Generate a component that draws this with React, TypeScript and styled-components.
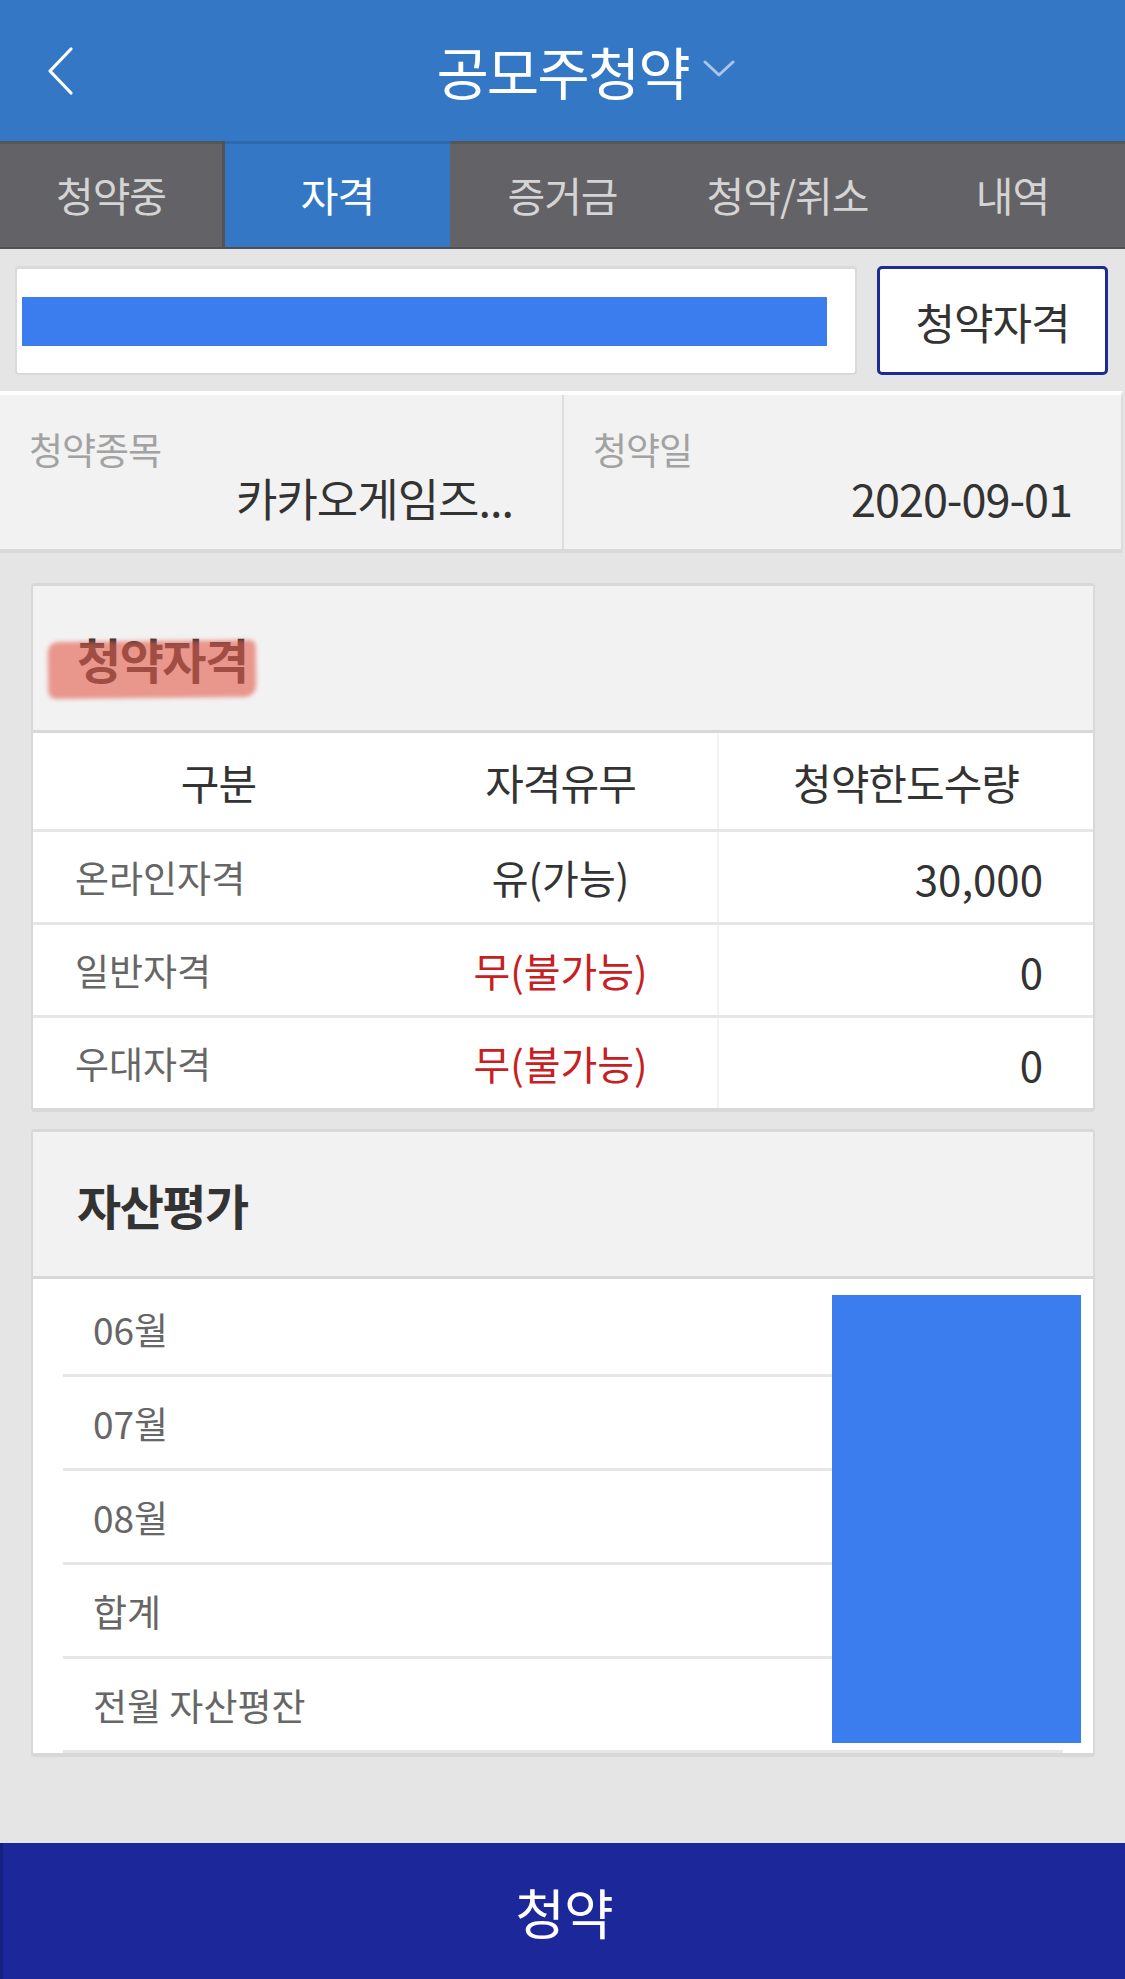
import React from 'react';
import styled, { createGlobalStyle, css } from 'styled-components';

const GlobalStyle = createGlobalStyle`
  html, body {
    margin: 0;
    padding: 0;
    background: #e5e5e5;
  }
  body {
    font-family: "Noto Sans CJK KR", "Noto Sans", sans-serif;
  }
  * {
    box-sizing: border-box;
  }
`;

const Page = styled.div`
  width: 1125px;
  min-height: 100vh;
  display: flex;
  flex-direction: column;
  background: #e5e5e5;
`;

const Header = styled.header`
  height: 141px;
  background: #3478c5;
  display: grid;
  grid-template-columns: 1fr auto 1fr;
  align-items: center;
`;

const BackButton = styled.button`
  justify-self: start;
  display: flex;
  padding: 0 0 0 46px;
  border: 0;
  background: none;
`;

const Title = styled.h1`
  margin: 0;
  color: #fff;
  font-size: 57px;
  font-weight: 400;
  letter-spacing: -2px;
  line-height: 1;
`;

const TitleToggle = styled.span`
  justify-self: start;
  display: flex;
  margin: -4px 0 0 14px;
`;

const TabBar = styled.nav`
  height: 108px;
  display: grid;
  grid-template-columns: repeat(5, 1fr);
  background: #636266;
  border-bottom: 2px solid #505053;
`;

const Tab = styled.button<{ $active?: boolean }>`
  display: flex;
  align-items: center;
  justify-content: center;
  border: 0;
  padding: 0;
  font-family: inherit;
  font-size: 41px;
  letter-spacing: -1px;
  color: #d4d4d4;
  background: transparent;
  box-shadow: inset 0 3px 0 rgba(0, 0, 0, 0.12);

  &:first-child {
    border-right: 3px solid #535256;
  }

  ${(p) =>
    p.$active &&
    css`
      background: #3478c5;
      color: #fff;
    `}
`;

const SearchRow = styled.div`
  display: flex;
  gap: 20px;
  padding: 17px 17px 0 15px;
`;

const SearchField = styled.div`
  flex: 1;
  height: 109px;
  display: flex;
  align-items: center;
  padding-left: 5px;
  background: #fff;
  border: 2px solid #d9d9d9;
  border-top-width: 3px;
  border-radius: 4px;
`;

const Redacted = styled.div<{ $w: number; $h: number }>`
  width: ${(p) => p.$w}px;
  height: ${(p) => p.$h}px;
  background: #3b7def;
`;

const QualifyButton = styled.button`
  width: 231px;
  height: 109px;
  background: #fff;
  border: 3px solid #1e2b94;
  border-radius: 5px;
  font-family: inherit;
  font-size: 43px;
  letter-spacing: -1px;
  color: #333;
`;

const InfoPanel = styled.section`
  margin-top: 16px;
  width: 1123px;
  display: grid;
  grid-template-columns: 562px 1fr;
  background: #f2f2f2;
  border-top: 4px solid #fff;
  border-bottom: 4px solid #d9d9d9;
  border-right: 2px solid #dcdcdc;
`;

const InfoCell = styled.div`
  padding: 34px 49px 27px 29px;

  & + & {
    border-left: 2px solid #dedede;
  }
`;

const InfoLabel = styled.div`
  font-size: 37px;
  line-height: 40px;
  letter-spacing: -1px;
  color: #a2a2a2;
`;

const InfoValue = styled.div`
  margin-top: 5px;
  font-size: 45px;
  line-height: 48px;
  letter-spacing: -1px;
  color: #333;
  text-align: right;
  white-space: nowrap;
`;

const Content = styled.main`
  display: flex;
  flex-direction: column;
  gap: 17px;
  padding: 30px 30px 0 31px;
`;

const Card = styled.section`
  background: #fff;
  border: 2px solid #d8d8d8;
  border-top-width: 3px;
  border-bottom-width: 4px;
  border-radius: 4px;
  overflow: hidden;
`;

const CardHeader = styled.div`
  height: 147px;
  display: flex;
  align-items: center;
  padding-left: 44px;
  background: #f2f2f2;
  border-bottom: 3px solid #d8d8d8;
`;

const CardTitle = styled.h2<{ $marked?: boolean }>`
  position: relative;
  margin: 0;
  font-size: 48px;
  font-weight: 700;
  line-height: 48px;
  letter-spacing: -1.5px;
  color: #333;

  ${(p) =>
    p.$marked &&
    css`
      &::after {
        content: '';
        position: absolute;
        left: -29px;
        right: -8px;
        top: 7px;
        bottom: -16px;
        background: rgba(227, 94, 77, 0.62);
        border-radius: 10px 6px 12px 8px;
        filter: blur(2px);
        transform: rotate(-0.6deg);
      }
    `}
`;

const QualRow = styled.div<{ $head?: boolean }>`
  display: grid;
  grid-template-columns: 371px 313px 1fr;
  height: ${(p) => (p.$head ? 99 : 93)}px;
  border-bottom: 3px solid #e6e6e6;

  &:last-child {
    height: 90px;
    border-bottom: 0;
  }
`;

const QualCell = styled.div<{ $align: 'left' | 'center' | 'right'; $head?: boolean; $tone?: 'label' | 'value' | 'bad' }>`
  display: flex;
  align-items: center;
  justify-content: ${(p) => (p.$align === 'left' ? 'flex-start' : p.$align === 'right' ? 'flex-end' : 'center')};
  padding: ${(p) => (p.$align === 'left' ? '0 0 0 42px' : p.$align === 'right' ? '0 50px 0 0' : '0')};
  font-size: ${(p) => (p.$head ? 42 : p.$tone === 'label' ? 37 : p.$align === 'right' ? 42 : 40)}px;
  letter-spacing: ${(p) => (p.$head ? '-1px' : '0')};
  color: ${(p) => (p.$tone === 'label' ? '#666' : p.$tone === 'bad' ? '#c8201f' : '#333')};

  &:nth-child(3) {
    border-left: 2px solid #f3f3f3;
  }
`;

const AssetBody = styled.div`
  position: relative;
  padding: 4px 30px 0;
`;

const AssetRow = styled.div`
  height: 94px;
  display: flex;
  align-items: center;
  padding-left: 30px;
  border-bottom: 3px solid #e6e6e6;
  font-size: 37px;
  color: #666;
`;

const AssetMask = styled.div`
  position: absolute;
  top: 16px;
  left: 799px;
  width: 249px;
  height: 448px;
  background: #3b7def;
`;

const SubmitButton = styled.button`
  margin-top: auto;
  height: 136px;
  width: 100%;
  border: 0;
  border-left: 3px solid #151f80;
  background: #1c2899;
  color: #fff;
  font-family: inherit;
  font-size: 54px;
  letter-spacing: -1px;
`;

const tabs = ['청약중', '자격', '증거금', '청약/취소', '내역'];

const qualRows: { name: string; status: string; ok: boolean; limit: string }[] = [
  { name: '온라인자격', status: '유(가능)', ok: true, limit: '30,000' },
  { name: '일반자격', status: '무(불가능)', ok: false, limit: '0' },
  { name: '우대자격', status: '무(불가능)', ok: false, limit: '0' },
];

const assetRows = ['06월', '07월', '08월', '합계', '전월 자산평잔'];

export default function App() {
  return (
    <Page>
      <GlobalStyle />
      <Header>
        <BackButton aria-label="뒤로">
          <svg width="28" height="50" viewBox="0 0 28 50">
            <polyline points="25,3 4,25 25,47" fill="none" stroke="#fff" strokeWidth="3.2" strokeLinecap="round" strokeLinejoin="round" />
          </svg>
        </BackButton>
        <Title>공모주청약</Title>
        <TitleToggle>
          <svg width="32" height="18" viewBox="0 0 32 18">
            <polyline points="2,2 16,15 30,2" fill="none" stroke="#a9c6ea" strokeWidth="3" strokeLinecap="round" strokeLinejoin="round" />
          </svg>
        </TitleToggle>
      </Header>

      <TabBar>
        {tabs.map((t) => (
          <Tab key={t} $active={t === '자격'}>
            {t}
          </Tab>
        ))}
      </TabBar>

      <SearchRow>
        <SearchField>
          <Redacted $w={805} $h={49} />
        </SearchField>
        <QualifyButton>청약자격</QualifyButton>
      </SearchRow>

      <InfoPanel>
        <InfoCell>
          <InfoLabel>청약종목</InfoLabel>
          <InfoValue>카카오게임즈...</InfoValue>
        </InfoCell>
        <InfoCell>
          <InfoLabel>청약일</InfoLabel>
          <InfoValue>2020-09-01</InfoValue>
        </InfoCell>
      </InfoPanel>

      <Content>
        <Card>
          <CardHeader>
            <CardTitle $marked>청약자격</CardTitle>
          </CardHeader>
          <QualRow $head>
            <QualCell $align="center" $head>구분</QualCell>
            <QualCell $align="center" $head>자격유무</QualCell>
            <QualCell $align="center" $head>청약한도수량</QualCell>
          </QualRow>
          {qualRows.map((r) => (
            <QualRow key={r.name}>
              <QualCell $align="left" $tone="label">{r.name}</QualCell>
              <QualCell $align="center" $tone={r.ok ? 'value' : 'bad'}>{r.status}</QualCell>
              <QualCell $align="right" $tone="value">{r.limit}</QualCell>
            </QualRow>
          ))}
        </Card>

        <Card>
          <CardHeader>
            <CardTitle>자산평가</CardTitle>
          </CardHeader>
          <AssetBody>
            {assetRows.map((m) => (
              <AssetRow key={m}>{m}</AssetRow>
            ))}
            <AssetMask />
          </AssetBody>
        </Card>
      </Content>

      <SubmitButton>청약</SubmitButton>
    </Page>
  );
}
